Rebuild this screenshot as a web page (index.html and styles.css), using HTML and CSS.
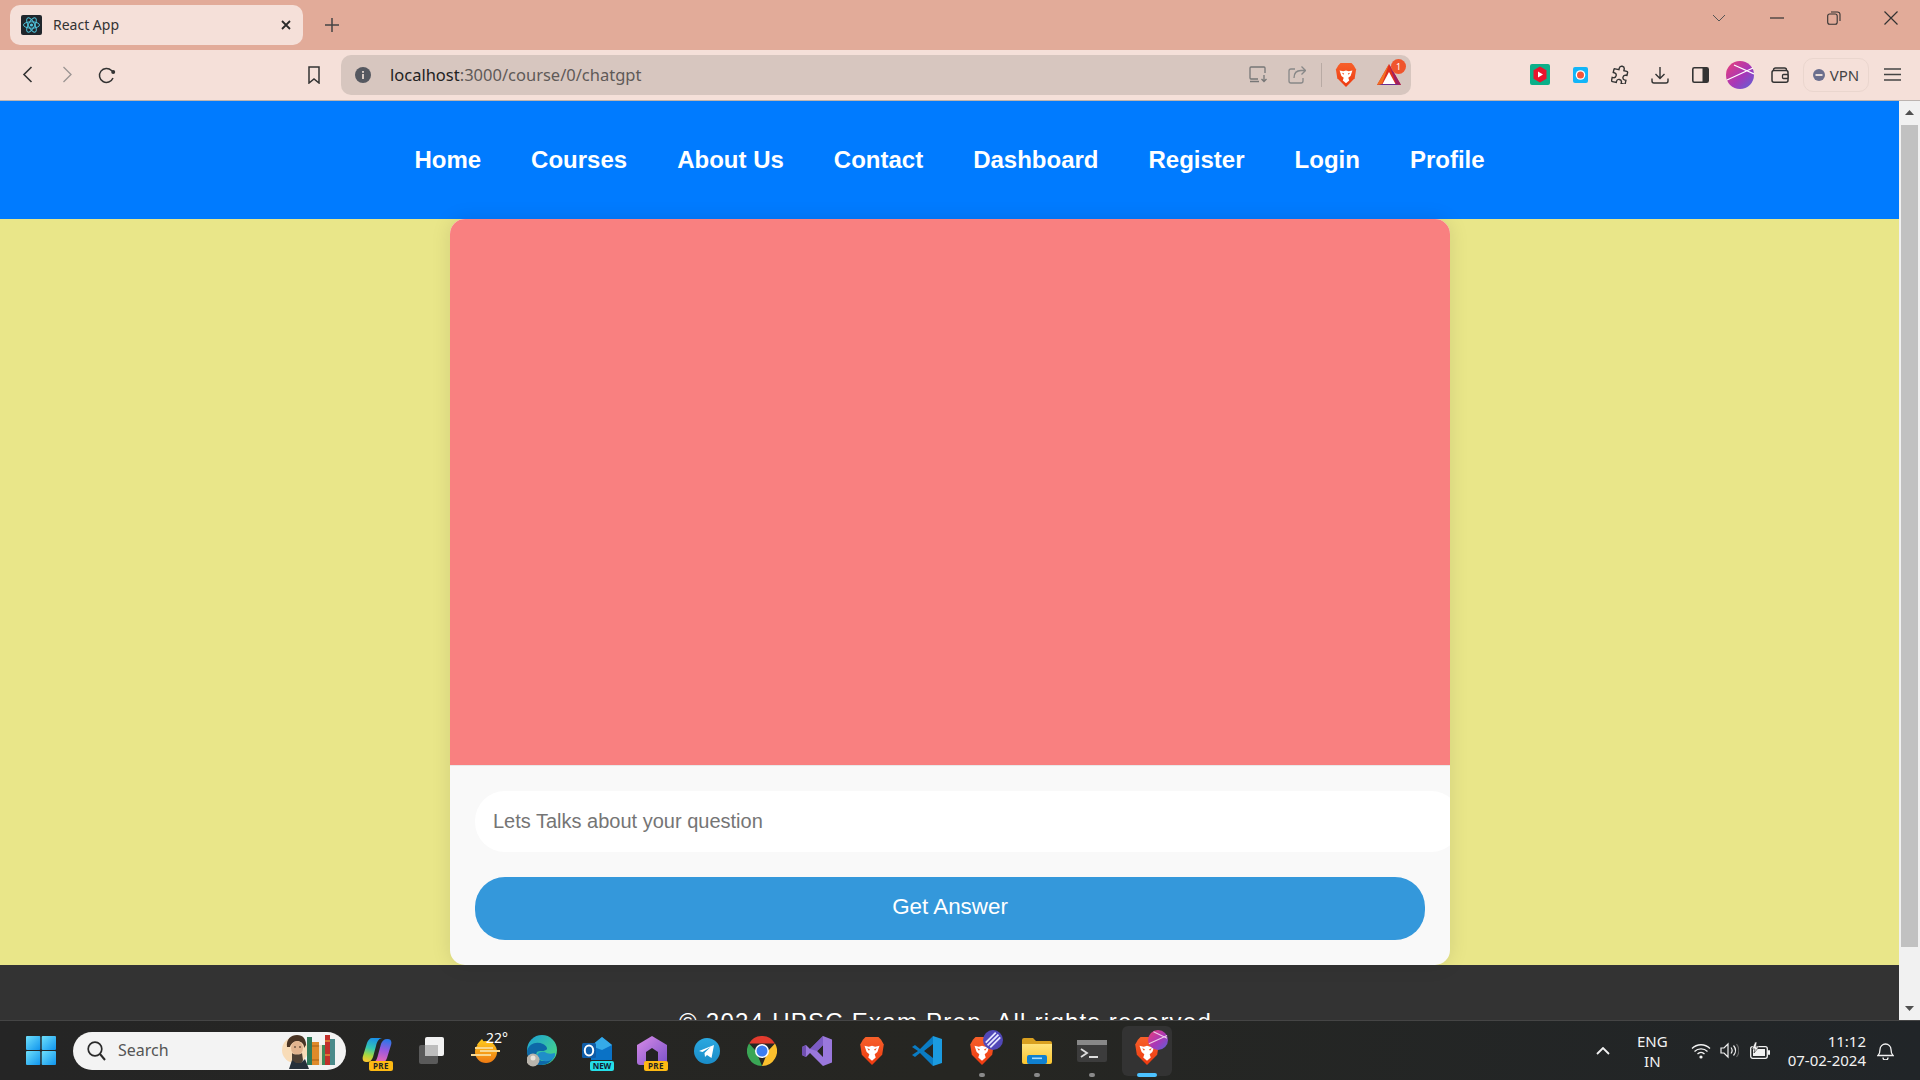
FILE: index.html
```html
<!DOCTYPE html>
<html lang="en">
<head>
<meta charset="utf-8">
<title>React App</title>
<link rel="stylesheet" href="styles.css">
</head>
<body>
<svg class="defs" width="0" height="0" aria-hidden="true">
  <defs>
    <linearGradient id="lionG" x1="0" y1="0" x2="0" y2="1"><stop offset="0" stop-color="#f7602a"/><stop offset="1" stop-color="#ee3a10"/></linearGradient>
    <linearGradient id="avaG" x1="0" y1="0" x2="1" y2="1"><stop offset="0" stop-color="#ea3f78"/><stop offset=".55" stop-color="#a837b8"/><stop offset="1" stop-color="#5a64d8"/></linearGradient>
    <linearGradient id="winG" x1="0" y1="0" x2="1" y2="1"><stop offset="0" stop-color="#6fe0fb"/><stop offset="1" stop-color="#0f94ee"/></linearGradient>
    <linearGradient id="copG" x1=".6" y1="0" x2=".4" y2="1"><stop offset="0" stop-color="#1a8fe8"/><stop offset=".45" stop-color="#35c8b0"/><stop offset=".75" stop-color="#a8d840"/><stop offset="1" stop-color="#f8c830"/></linearGradient>
    <linearGradient id="copH" x1=".4" y1="1" x2=".6" y2="0"><stop offset="0" stop-color="#2a78e8"/><stop offset=".45" stop-color="#9a58e0"/><stop offset="1" stop-color="#f06ab0"/></linearGradient>
    <linearGradient id="edgeG" x1="0" y1="0" x2="1" y2="1"><stop offset="0" stop-color="#1a9fd8"/><stop offset="1" stop-color="#4fe07a"/></linearGradient>
    <linearGradient id="sunG" x1="0" y1="0" x2="0" y2="1"><stop offset="0" stop-color="#fdc51d"/><stop offset="1" stop-color="#ef7a12"/></linearGradient>
    <linearGradient id="folderG" x1="0" y1="0" x2="0" y2="1"><stop offset="0" stop-color="#ffe27a"/><stop offset="1" stop-color="#fbc52f"/></linearGradient>
    <linearGradient id="houseG" x1="0" y1="0" x2="1" y2="1"><stop offset="0" stop-color="#d98be8"/><stop offset="1" stop-color="#7a52c8"/></linearGradient>
    <linearGradient id="tgG" x1="0" y1="0" x2="0" y2="1"><stop offset="0" stop-color="#2aa8e0"/><stop offset="1" stop-color="#1a8cc8"/></linearGradient>
    <symbol id="lion" viewBox="0 0 24 28">
      <path d="M6 1h12l2.500 2.500L23 8l-1.500 9.500L12 27 2.500 17.500 1 8l2.500-4.500z" fill="url(#lionG)"/>
      <path d="M5 9l4 1 3-1 3 1 4-1-2 6-2.500 2 1 3L12 23l-3.500-3 1-3L7 15z" fill="#fff"/>
      <path d="M7.500 11.500l2.500.8-.8 1.500zM16.500 11.500l-2.500.8.800 1.500z" fill="#ee4a18"/>
    </symbol>
    <symbol id="pre" viewBox="0 0 24 10">
      <rect width="24" height="10" rx="2" fill="#fdb913"/>
      <text x="12" y="8.200" text-anchor="middle" class="badge-text">PRE</text>
    </symbol>
  </defs>
</svg>

<header class="tabstrip">
  <div class="tab">
    <svg class="favicon" width="21" height="20" viewBox="0 0 21 20"><rect width="21" height="20" rx="2" fill="#20262c"/><g fill="none" stroke="#4fc4dc" stroke-width="1"><ellipse cx="10.500" cy="10" rx="8" ry="3.200"/><ellipse cx="10.500" cy="10" rx="8" ry="3.200" transform="rotate(60 10.500 10)"/><ellipse cx="10.500" cy="10" rx="8" ry="3.200" transform="rotate(120 10.500 10)"/></g><circle cx="10.500" cy="10" r="1.600" fill="#4fc4dc"/></svg>
    <span class="tab-title">React App</span>
    <svg class="tab-close" width="10" height="10" viewBox="0 0 10 10"><path d="M1 1l8 8M9 1L1 9" stroke="#2a2a2a" stroke-width="1.800" fill="none"/></svg>
  </div>
  <svg class="new-tab" width="14" height="14" viewBox="0 0 14 14"><path d="M7 0v14M0 7h14" stroke="#444" stroke-width="1.500"/></svg>
  <div class="win-controls">
    <span class="win-slot win-chev"><svg width="14" height="8" viewBox="0 0 14 8"><path d="M1 1l6 6 6-6" stroke="#555" fill="none"/></svg></span>
    <span class="win-slot"><svg width="14" height="2" viewBox="0 0 14 2"><path d="M0 1h14" stroke="#333" stroke-width="1.200"/></svg></span>
    <span class="win-slot win-restore"><svg width="14" height="14" viewBox="0 0 14 14"><rect x=".7" y="3" width="9.500" height="10.300" rx="2" fill="none" stroke="#333" stroke-width="1.100"/><path d="M4 1h6.500a2.500 2.500 0 0 1 2.500 2.500V10" fill="none" stroke="#333" stroke-width="1.100"/></svg></span>
    <span class="win-slot"><svg width="14" height="14" viewBox="0 0 14 14"><path d="M.5.5l13 13M13.500.5l-13 13" stroke="#333" stroke-width="1.200"/></svg></span>
  </div>
</header>

<nav class="toolbar">
  <span class="tool-slot"><svg width="11" height="17" viewBox="0 0 11 17"><path d="M9.500 1L2 8.500 9.500 16" fill="none" stroke="#333" stroke-width="1.600"/></svg></span>
  <span class="tool-slot"><svg width="11" height="17" viewBox="0 0 11 17"><path d="M1.500 1L9 8.500 1.500 16" fill="none" stroke="#9a9492" stroke-width="1.300"/></svg></span>
  <span class="tool-slot"><svg width="18" height="18" viewBox="0 0 18 18"><path d="M15 12a7 7 0 1 1-1.500-7.500L15.500 6" fill="none" stroke="#333" stroke-width="1.500"/><circle cx="15.200" cy="6" r="2" fill="#333"/></svg></span>
  <span class="tool-slot tool-bookmark"><svg width="14" height="18" viewBox="0 0 14 18"><path d="M2 1h10v16l-5-4-5 4z" fill="none" stroke="#333" stroke-width="1.500"/></svg></span>
  <div class="urlbar">
    <svg class="url-info" width="16" height="16" viewBox="0 0 16 16"><circle cx="8" cy="8" r="8" fill="#555860"/><rect x="7.100" y="7" width="1.800" height="5" fill="#e6d8d0"/><rect x="7.100" y="4" width="1.800" height="1.800" fill="#e6d8d0"/></svg>
    <span class="url-text"><span class="url-host">localhost</span>:3000/course/0/chatgpt</span>
    <svg class="url-cast" width="19" height="17" viewBox="0 0 19 17"><path d="M9 13H2a1 1 0 0 1-1-1V2a1 1 0 0 1 1-1h13a1 1 0 0 1 1 1v5M1 15.500h9" fill="none" stroke="#777" stroke-width="1.300"/><path d="M15 9v6M12.500 13l2.500 2.500 2.500-2.500" fill="none" stroke="#777" stroke-width="1.300"/></svg>
    <svg class="url-share" width="18" height="19" viewBox="0 0 18 19"><path d="M7 4H3a2 2 0 0 0-2 2v10a2 2 0 0 0 2 2h10a2 2 0 0 0 2-2v-3" fill="none" stroke="#888" stroke-width="1.300"/><path d="M6 13c0-5 3-7.500 7-7.500H17M13.500 1.500L17.500 5.500 13.500 9.500" fill="none" stroke="#888" stroke-width="1.300"/></svg>
    <span class="url-sep"></span>
    <svg class="url-lion" width="22" height="26"><use href="#lion"/></svg>
    <span class="url-bat">
      <svg width="24" height="22" viewBox="0 0 24 22"><path d="M12 0L24 21H0z" fill="#e0301e"/><path d="M12 8l7 13H5z" fill="#fff"/><path d="M0 21l5-1h14l5 1z" fill="#662d91"/><path d="M12 0L5 20 0 21z" fill="#f37021"/><path d="M12 0l7 20 5 1z" fill="#9e1f63"/></svg>
      <span class="bat-badge">1</span>
    </span>
  </div>
  <div class="tool-ext">
    <span class="tool-slot"><svg width="20" height="21" viewBox="0 0 20 21"><rect width="20" height="21" rx="2" fill="#0bb089"/><path d="M10 2.500l6.500 3.800v8.400L10 18.500l-6.500-3.800V6.300z" fill="#e8142c"/><path d="M8 7.500l5 3-5 3z" fill="#fff"/></svg></span>
    <span class="tool-slot"><svg width="15" height="16" viewBox="0 0 15 16"><rect width="15" height="16" rx="2" fill="#12b5f8"/><circle cx="7.500" cy="8" r="4.800" fill="#fff"/><circle cx="7.500" cy="8" r="3.500" fill="#f5553a"/></svg></span>
    <span class="tool-slot"><svg width="18" height="19" viewBox="0 0 18 19"><path d="M7 3.500a2.500 2.500 0 0 1 5 0V5h3a1 1 0 0 1 1 1v3h-1a2.500 2.500 0 0 0 0 5h1v3a1 1 0 0 1-1 1h-3v-1a2.500 2.500 0 0 0-5 0v1H3a1 1 0 0 1-1-1v-3h1a2.500 2.500 0 0 0 0-5H2V6a1 1 0 0 1 1-1h4z" transform="rotate(12 9 9.500)" fill="none" stroke="#333" stroke-width="1.400"/></svg></span>
    <span class="tool-slot"><svg width="18" height="18" viewBox="0 0 18 18"><path d="M9 1v11M4.500 8L9 12.500 13.500 8M1 12.500V15a2 2 0 0 0 2 2h12a2 2 0 0 0 2-2v-2.500" fill="none" stroke="#333" stroke-width="1.400"/></svg></span>
    <span class="tool-slot"><svg width="17" height="16" viewBox="0 0 17 16"><rect x=".8" y=".8" width="15.400" height="14.400" rx="1.500" fill="none" stroke="#333" stroke-width="1.600"/><rect x="10.500" y="1" width="5.500" height="14" fill="#333"/></svg></span>
    <span class="tool-slot"><svg width="28" height="28" viewBox="0 0 28 28"><circle cx="14" cy="14" r="14" fill="url(#avaG)"/><path d="M1 19L27 7M8 4l20 9" stroke="#fff" stroke-width="1.300" fill="none"/></svg></span>
    <span class="tool-slot"><svg width="18" height="16" viewBox="0 0 18 16"><path d="M2.500 3.500V3a2 2 0 0 1 2-2h9a2 2 0 0 1 2 2v1" fill="none" stroke="#333" stroke-width="1.400"/><rect x="1" y="3.500" width="16" height="11.700" rx="2" fill="none" stroke="#333" stroke-width="1.500"/><rect x="11.500" y="7.500" width="5.500" height="4" rx="1" fill="#f5e0d9" stroke="#333" stroke-width="1.300"/></svg></span>
  </div>
  <div class="vpn"><svg width="12" height="12" viewBox="0 0 12 12"><circle cx="6" cy="6" r="6" fill="#6b6f8e"/><rect x="2.500" y="5" width="7" height="2" fill="#e8dcd8"/></svg><span>VPN</span></div>
  <span class="tool-slot"><svg width="17" height="13" viewBox="0 0 17 13"><path d="M0 1h17M0 6.500h17M0 12h17" stroke="#444" stroke-width="1.500"/></svg></span>
</nav>

<div class="viewport">
  <div class="page">
    <div class="site-nav">
      <a class="nav-link">Home</a>
      <a class="nav-link">Courses</a>
      <a class="nav-link">About Us</a>
      <a class="nav-link">Contact</a>
      <a class="nav-link">Dashboard</a>
      <a class="nav-link">Register</a>
      <a class="nav-link">Login</a>
      <a class="nav-link">Profile</a>
    </div>
    <main class="main">
      <section class="card">
        <div class="chat-box"></div>
        <div class="form">
          <input class="question" type="text" placeholder="Lets Talks about your question">
          <button class="answer" type="button">Get Answer</button>
        </div>
      </section>
    </main>
    <footer class="site-footer">© 2024 UPSC Exam Prep. All rights reserved.</footer>
  </div>
  <aside class="scrollbar">
    <svg class="sb-arrow" width="9" height="5" viewBox="0 0 9 5"><path d="M4.500 0L9 5H0z" fill="#505050"/></svg>
    <div class="sb-track"><div class="sb-thumb"></div></div>
    <svg class="sb-arrow" width="9" height="5" viewBox="0 0 9 5"><path d="M0 0h9L4.500 5z" fill="#505050"/></svg>
  </aside>
</div>

<footer class="taskbar">
  <span class="start"><svg width="30" height="29" viewBox="0 0 30 29"><rect width="14.300" height="14" rx="1" fill="url(#winG)"/><rect x="15.700" width="14.300" height="14" rx="1" fill="url(#winG)"/><rect y="15" width="14.300" height="14" rx="1" fill="url(#winG)"/><rect x="15.700" y="15" width="14.300" height="14" rx="1" fill="url(#winG)"/></svg></span>
  <div class="search">
    <svg width="19" height="20" viewBox="0 0 19 20"><circle cx="8" cy="8" r="6.800" fill="none" stroke="#2a2a2a" stroke-width="1.700"/><path d="M13 13l5 6" stroke="#2a2a2a" stroke-width="2"/></svg>
    <span class="search-label">Search</span>
    <svg class="doodle" width="54" height="36" viewBox="0 0 54 36"><circle cx="13" cy="17" r="13" fill="#f8dcb8"/><path d="M5 14c-1-8 4-12 10-12s9 4 9 10l-2 3c0-4-2-6-6-7-3 0-7 2-8 6z" fill="#4a3424"/><ellipse cx="15" cy="15" rx="6" ry="7" fill="#e2b48e"/><path d="M12 14h2M17 14h2" stroke="#3a2a1e" stroke-width="1"/><path d="M10 20c2 2 8 2 10 0l1 7c-1 6-10 6-11 0z" fill="#4d4034"/><path d="M7 36l3-9 4 3 5 0 4-4 4 10z" fill="#26303a"/><rect x="25" y="4" width="5" height="28" fill="#2f7a5a"/><rect x="30" y="9" width="7" height="23" fill="#e08a2a"/><path d="M30 13h7M30 27h7" stroke="#a85f14"/><rect x="37" y="12" width="3" height="20" fill="#e8dcc0"/><rect x="40" y="12" width="3" height="20" fill="#3f8a5a"/><rect x="43" y="2" width="5" height="30" fill="#c22f2a"/><path d="M43 8h5M43 22h5" stroke="#f0c040"/><rect x="48" y="6" width="5" height="26" fill="#4a8a8a"/></svg>
  </div>
  <div class="apps">
    <span class="app"><svg width="30" height="28" viewBox="0 0 30 28"><path d="M10 1h10c-4 1-5 4-6 8l-3 11c-1 3-3 5-6 5H4c-3 0-4-3-3-6L5 6c1-3 3-5 5-5z" fill="url(#copG)"/><path d="M10 1h10c-4 1-5 4-6 8l-3 11c-1 3-3 5-6 5H4c-3 0-4-3-3-6L5 6c1-3 3-5 5-5z" fill="url(#copH)" transform="rotate(180 15 13.500)"/></svg><svg class="app-badge" width="24" height="10"><use href="#pre"/></svg></span>
    <span class="app"><svg width="25" height="28" viewBox="0 0 25 28"><rect y="8" width="19" height="19" rx="2" fill="#5a5a5a"/><rect x="6" y="0" width="19" height="19" rx="2" fill="#f2f2f2"/><rect x="6" y="8" width="13" height="11" fill="#bdbdbd"/></svg></span>
    <span class="app"><svg width="32" height="26" viewBox="0 0 32 26"><path d="M11 1l4 6-9 0c1-2 3-4 5-6z" fill="#fdc51d"/><circle cx="15" cy="14" r="11" fill="url(#sunG)"/><path d="M4 9h18v2H4zM9 12h20v2H9zM0 16h20v2H0z" fill="#f8d78e"/></svg><span class="temp">22°</span></span>
    <span class="app"><svg width="30" height="32" viewBox="0 0 30 32"><circle cx="15" cy="15" r="15" fill="url(#edgeG)"/><path d="M0 16C2 8 10 6 16 9c4 2 5 5 3 6-3 2-7 0-9 2-2 3 0 9 7 9 5 0 9-2 11-6-2 6-8 10-14 10-8 0-14-6-14-14z" fill="#0d68a8"/><path d="M10 20c1-3 6-4 8-3 2 2 6 2 10 1l0 3c-3 5-8 6-11 5-4-1-8-3-7-6z" fill="#1f8ec9"/><circle cx="6" cy="25" r="6.500" fill="#b9b4ac"/><circle cx="6" cy="23" r="2.500" fill="#e8e4dc"/></svg></span>
    <span class="app"><svg width="30" height="29" viewBox="0 0 30 29"><path d="M9 10L20 1l10 8v15H9z" fill="#0a72c6"/><path d="M20 1l10 8-10 5-11-4z" fill="#35aae8"/><rect y="7" width="14" height="15" rx="1.500" fill="#0f5da8"/><ellipse cx="7" cy="14.500" rx="4.200" ry="5" fill="none" stroke="#fff" stroke-width="2"/></svg><span class="new-badge">NEW</span></span>
    <span class="app"><svg width="30" height="30" viewBox="0 0 30 30"><path d="M15 0l15 9v17a3 3 0 0 1-3 3H3a3 3 0 0 1-3-3V9z" fill="url(#houseG)"/><path d="M15 12l6 4v13H9V16z" fill="#232323"/></svg><svg class="app-badge" width="24" height="10"><use href="#pre"/></svg></span>
    <span class="app"><svg width="26" height="26" viewBox="0 0 26 26"><circle cx="13" cy="13" r="13" fill="url(#tgG)"/><path d="M5 13l15-6-2.500 13-4.500-3-2 2-.5-4 6-6-8 5z" fill="#fff"/></svg></span>
    <span class="app"><svg width="30" height="30" viewBox="0 0 30 30"><path d="M2 7.500A15 15 0 0 1 28 7.500L15 7.500z" fill="#e33b2e"/><path d="M28 7.500A15 15 0 0 1 15 30L21 15z" fill="#fbc02d"/><path d="M15 30A15 15 0 0 1 2 7.500L9 15z" fill="#3aa655"/><circle cx="15" cy="15" r="7" fill="#fff"/><circle cx="15" cy="15" r="5.500" fill="#3b7df0"/></svg></span>
    <span class="app"><svg width="30" height="30" viewBox="0 0 30 30"><path d="M21 0l9 3.500v23L21 30 8 17l-4 4-4-2V11l4-2 4 4zM21 9l-6 6 6 6z" fill="#9a78dc"/><path d="M21 0v9l-6 6-7-2z" fill="#7c5cc4"/><path d="M0 11l4-2v12l-4-2z" fill="#6f4fb0"/></svg></span>
    <span class="app"><svg width="26" height="30"><use href="#lion"/></svg></span>
    <span class="app"><svg width="30" height="30" viewBox="0 0 30 30"><path d="M21 0l9 3v24l-9 3z" fill="#1b9be0"/><path d="M21 0L8 13l-5-4-3 2 6 4-6 4 3 2 5-4 13 13v-8l-9-7 9-7z" fill="#0a7cc4"/></svg></span>
    <span class="app is-open"><svg width="26" height="30"><use href="#lion"/></svg><svg class="app-over" width="20" height="20" viewBox="0 0 22 22"><circle cx="11" cy="11" r="11" fill="#5148b8"/><path d="M5 17L17 5M8 19L19 8M3 14L14 3" stroke="#e6e6ff" stroke-width="2"/></svg></span>
    <span class="app is-open"><svg width="30" height="27" viewBox="0 0 30 27"><path d="M0 3a2 2 0 0 1 2-2h9l3 3h14a2 2 0 0 1 2 2v3H0z" fill="#d9a020"/><path d="M0 7h30v18a2 2 0 0 1-2 2H2a2 2 0 0 1-2-2z" fill="url(#folderG)"/><rect x="5" y="18" width="20" height="9" rx="2" fill="#1080d0"/><rect x="10" y="20.500" width="10" height="1.600" fill="#a8dcff"/></svg></span>
    <span class="app is-open"><svg width="30" height="22" viewBox="0 0 30 22"><rect width="30" height="22" rx="2" fill="#3c3c3c"/><rect width="30" height="5" fill="#888"/><path d="M4 9l6 4-6 4" fill="none" stroke="#ddd" stroke-width="1.800"/><rect x="12" y="16" width="9" height="2" fill="#ddd"/></svg></span>
    <span class="app is-active"><svg width="26" height="30"><use href="#lion"/></svg><svg class="app-over" width="20" height="20" viewBox="0 0 22 22"><circle cx="11" cy="11" r="11" fill="url(#avaG)"/><path d="M1 15L21 6M6 2l15 7" stroke="#eecce8" stroke-width="1.200" fill="none"/></svg></span>
  </div>
  <div class="tray">
    <svg class="tray-chev" width="14" height="8" viewBox="0 0 14 8"><path d="M1 7l6-6 6 6" fill="none" stroke="#f2f2f2" stroke-width="1.800"/></svg>
    <div class="lang"><span>ENG</span><span>IN</span></div>
    <svg class="tray-wifi" width="20" height="16" viewBox="0 0 20 16"><path d="M1 5.500c5-5 13-5 18 0M3.500 8.500c3.500-3.500 9.500-3.500 13 0M6.500 11c2-2 5-2 7 0" fill="none" stroke="#f2f2f2" stroke-width="1.300"/><circle cx="10" cy="14" r="1.600" fill="#f2f2f2"/></svg>
    <svg class="tray-vol" width="19" height="17" viewBox="0 0 19 17"><path d="M1 6v5h3l4 4V2L4 6z" fill="none" stroke="#f2f2f2" stroke-width="1.200"/><path d="M11 5.500c1.500 2 1.500 4 0 6M13.500 3.500c2.500 3 2.500 7 0 10" fill="none" stroke="#f2f2f2" stroke-width="1.200"/><path d="M16.500 2c3 4 3 9 0 13" fill="none" stroke="#666" stroke-width="1.200"/></svg>
    <svg class="tray-batt" width="20" height="18" viewBox="0 0 20 18"><rect x=".7" y="4.700" width="16.600" height="11.600" rx="2" fill="none" stroke="#f2f2f2" stroke-width="1.300"/><rect x="3" y="7" width="12" height="7" fill="#f2f2f2"/><rect x="18" y="8" width="2" height="5" rx="1" fill="#f2f2f2"/><path d="M5 0L2 7h3l-1 4 5-6H6l1-5z" fill="#f2f2f2" stroke="#222" stroke-width=".6"/></svg>
    <div class="clock"><span>11:12</span><span>07-02-2024</span></div>
    <svg class="tray-bell" width="17" height="19" viewBox="0 0 17 19"><path d="M1 14.500c1.500-1.500 2-3 2-6a5.500 5.500 0 0 1 11 0c0 3 .5 4.500 2 6z" fill="none" stroke="#f2f2f2" stroke-width="1.300"/><path d="M6 16.500a2.500 2.500 0 0 0 5 0" fill="none" stroke="#f2f2f2" stroke-width="1.300"/></svg>
  </div>
</footer>
</body>
</html>
```

FILE: styles.css
```css
* { box-sizing: border-box; }
html, body { margin: 0; height: 100%; }
body {
  width: 1920px;
  height: 1080px;
  overflow: hidden;
  display: flex;
  flex-direction: column;
  font-family: "Noto Sans", sans-serif;
  background: #e2ab99;
}
.defs { position: absolute; }
.badge-text { font: 700 8px "Noto Sans", sans-serif; fill: #222; letter-spacing: .5px; }

/* browser tab strip */
.tabstrip {
  flex: 0 0 50px;
  display: flex;
  align-items: center;
  padding: 0 0 0 10px;
  background: #e2ab99;
}
.tab {
  width: 293px;
  height: 40px;
  display: flex;
  align-items: center;
  padding: 0 12px 0 11px;
  border-radius: 10px;
  background: #f5e0d9;
}
.tab-title { margin: 0 0 2px 11px; font-size: 14px; color: #333; }
.tab-close { margin-left: auto; }
.new-tab { margin-left: 22px; }
.win-controls { margin-left: auto; align-self: stretch; display: flex; height: 36px; }
.win-slot { width: 58px; display: flex; align-items: center; justify-content: center; }
.win-chev { width: 38px; margin-right: 10px; }
.win-restore { width: 56px; }

/* browser toolbar */
.toolbar {
  flex: 0 0 51px;
  display: flex;
  align-items: center;
  padding: 0 0 1px 7px;
  background: #f5e0d9;
  border-bottom: 1px solid #bcb4b0;
}
.tool-slot { flex: 0 0 40px; display: flex; align-items: center; justify-content: center; }
.tool-bookmark { margin-left: 167px; }
.urlbar {
  width: 1070px;
  height: 40px;
  margin-left: 7px;
  display: flex;
  align-items: center;
  padding-left: 14px;
  border-radius: 10px;
  background: #d7c6bf;
}
.url-text { margin-left: 19px; font-size: 16.500px; color: #5f5a58; }
.url-host { color: #222; }
.url-cast { margin-left: auto; }
.url-share { margin-left: 20px; }
.url-sep { width: 1px; height: 24px; margin-left: 15px; background: #b8aaa4; }
.url-lion { margin-left: 13px; }
.url-bat { position: relative; display: flex; margin: 0 10px 0 20px; }
.bat-badge {
  position: absolute;
  top: -5px;
  right: -5px;
  width: 15px;
  height: 15px;
  border-radius: 50%;
  background: #f0552c;
  color: #fff;
  font-size: 9px;
  line-height: 15px;
  text-align: center;
}
.tool-ext { display: flex; margin-left: 109px; }
.vpn {
  width: 66px;
  height: 34px;
  margin: 0 3px;
  display: flex;
  align-items: center;
  justify-content: center;
  gap: 5px;
  border: 1px solid #ead6ce;
  border-radius: 10px;
  font-size: 15px;
  color: #444;
}

/* page viewport */
.viewport { flex: 1 1 auto; min-height: 0; display: flex; }
.page {
  flex: 1 1 auto;
  min-width: 0;
  overflow: hidden;
  background: #e9e689;
  font-family: "Liberation Sans", Arial, sans-serif;
}
.site-nav {
  height: 118px;
  display: flex;
  justify-content: center;
  align-items: center;
  gap: 50px;
  background: #007bff;
}
.nav-link { font-size: 24px; font-weight: 700; color: #fff; }
.main { display: flex; justify-content: center; padding-left: 1px; }
.card {
  width: 1000px;
  overflow: hidden;
  border-radius: 15px;
  background: #f9f9f9;
  box-shadow: 0 0 20px rgba(0, 0, 0, .1);
}
.chat-box { height: 547px; background: #f98080; border-bottom: 1px solid #e8e8e8; }
.form { display: flex; flex-direction: column; align-items: flex-start; gap: 25px; padding: 25px; }
.question {
  flex: none;
  width: 986px;
  height: 61px;
  padding: 0 18px;
  border: 0;
  border-radius: 30px;
  background: #fff;
  font: 20px "Liberation Sans", Arial, sans-serif;
  outline: 0;
}
.question::placeholder { color: #757575; opacity: 1; }
.answer {
  width: 950px;
  height: 63px;
  padding: 0 0 3px;
  border: 0;
  border-radius: 30px;
  background: #3498db;
  color: #fff;
  font: 22.400px "Liberation Sans", Arial, sans-serif;
}
.site-footer {
  padding: 43px 20px 40px;
  background: #333;
  color: #fff;
  font-size: 24px;
  letter-spacing: 1.250px;
  text-align: center;
}
.scrollbar {
  flex: 0 0 21px;
  display: flex;
  flex-direction: column;
  align-items: center;
  padding: 9px 0 9px;
  background: #f1f1f1;
}
.sb-track { flex: 1 1 auto; width: 100%; padding: 10px 2px 0; }
.sb-thumb { height: 822px; background: #c1c1c1; }
.sb-arrow { flex: none; }

/* windows taskbar */
.taskbar {
  flex: 0 0 60px;
  display: flex;
  align-items: center;
  padding-left: 16px;
  background: linear-gradient(90deg, #252525, #262622 50%, #212528);
  border-top: 1px solid #454545;
  color: #f2f2f2;
}
.start { flex: 0 0 50px; display: flex; justify-content: center; }
.search {
  width: 273px;
  height: 38px;
  margin-left: 7px;
  display: flex;
  align-items: center;
  padding-left: 14px;
  border-radius: 19px;
  background: #f3f3f3;
}
.search-label { margin: 0 0 2px 12px; font-size: 16px; color: #555; }
.doodle { margin-left: auto; margin-right: 10px; }
.apps { display: flex; margin-left: 3px; }
.app {
  position: relative;
  flex: 0 0 55px;
  height: 50px;
  display: flex;
  align-items: center;
  justify-content: center;
}
.app-badge { position: absolute; left: 20px; bottom: 5px; }
.temp {
  position: absolute;
  top: 3px;
  right: 6px;
  font-size: 14px;
  line-height: 18px;
  color: #fff;
}
.new-badge {
  position: absolute;
  right: 10px;
  bottom: 5px;
  width: 24px;
  height: 10px;
  border-radius: 2px;
  background: #25dfe8;
  color: #123;
  font-size: 8px;
  font-weight: 700;
  line-height: 10px;
  text-align: center;
}
.app-over { position: absolute; top: 4px; right: 6px; }
.is-open::after {
  content: "";
  position: absolute;
  left: 50%;
  bottom: -1px;
  width: 6px;
  height: 4px;
  margin-left: -3px;
  border-radius: 2px;
  background: #8a8a8a;
}
.is-active { flex-basis: 50px; margin: 0 2.500px; border-radius: 6px; background: #333; }
.is-active .app-over { right: 4px; }
.is-active::after {
  content: "";
  position: absolute;
  left: 50%;
  bottom: -1px;
  width: 20px;
  height: 4px;
  margin-left: -10px;
  border-radius: 2px;
  background: #4cc2ff;
}
.tray { margin-left: auto; display: flex; align-items: center; padding-right: 26px; }
.lang { display: flex; flex-direction: column; align-items: center; margin-left: 27px; font-size: 15px; line-height: 20px; }
.tray-wifi { margin-left: 23px; }
.tray-vol { margin-left: 9px; }
.tray-batt { margin-left: 11px; }
.clock { display: flex; flex-direction: column; align-items: flex-end; margin-left: 18px; font-size: 15px; line-height: 19px; }
.tray-bell { margin-left: 11px; }
```
